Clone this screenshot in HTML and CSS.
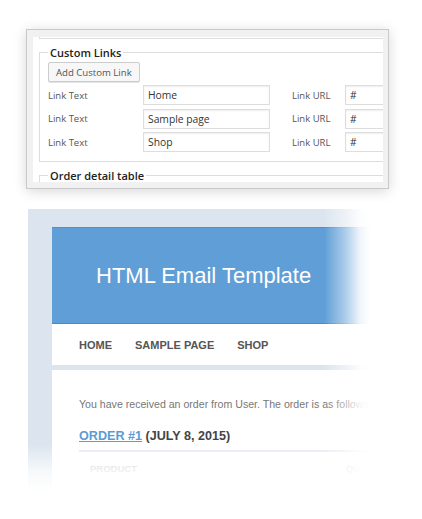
FILE: index.html
```html
<!DOCTYPE html>
<html lang="en">
<head>
    <meta charset="UTF-8">
    <meta name="viewport" content="width=device-width, initial-scale=1.0">
    <title>Email Template Settings</title>
    <link rel="stylesheet" href="styles.css">
</head>
<body>
    <div class="admin-frame">
        <div class="admin-inner">
            <div class="fieldset-end"></div>
            <fieldset class="group">
                <legend>Custom Links</legend>
                <button type="button" class="add-link">Add Custom Link</button>
                <div class="link-row">
                    <label>Link Text</label>
                    <input type="text" class="link-text" value="Home">
                    <label class="url-label">Link URL</label>
                    <input type="text" class="link-url" value="#">
                </div>
                <div class="link-row">
                    <label>Link Text</label>
                    <input type="text" class="link-text" value="Sample page">
                    <label class="url-label">Link URL</label>
                    <input type="text" class="link-url" value="#">
                </div>
                <div class="link-row">
                    <label>Link Text</label>
                    <input type="text" class="link-text" value="Shop">
                    <label class="url-label">Link URL</label>
                    <input type="text" class="link-url" value="#">
                </div>
            </fieldset>
            <fieldset class="group group-next">
                <legend>Order detail table</legend>
            </fieldset>
        </div>
    </div>

    <div class="email-preview">
        <div class="email">
            <div class="email-header">HTML Email Template</div>
            <div class="email-nav">
                <span>Home</span>
                <span>Sample page</span>
                <span>Shop</span>
            </div>
            <div class="email-body">
                <p class="intro">You have received an order from User. The order is as follows:</p>
                <h2 class="order-title"><a href="#">Order #1</a> (July 8, 2015)</h2>
                <div class="order-head">
                    <span class="col-product">Product</span>
                    <span>Quantity</span>
                </div>
            </div>
        </div>
    </div>
</body>
</html>
```

FILE: styles.css
```css
body {
    margin: 0;
    background-color: #fff;
    font-family: "Open Sans", Arial, sans-serif;
    overflow: hidden;
}

/* admin settings panel */
.admin-frame {
    width: 363px;
    height: 160px;
    margin: 29px 0 0 26px;
    padding: 7px 5px 6px 6px;
    box-sizing: border-box;
    border: 1px solid #c9c9c9;
    background-color: #f1f1f1;
    box-shadow: 0 2px 12px rgba(0,0,0,0.16);
}
.admin-inner {
    height: 100%;
    padding-left: 6px;
    background-color: #fff;
    overflow: hidden;
}
.fieldset-end {
    width: 420px;
    height: 1px;
    border-left: 1px solid #ddd;
    border-bottom: 1px solid #ddd;
}
.group {
    width: 420px;
    margin: 6px 0 0;
    padding: 0 8px 9px;
    border: 1px solid #ddd;
    box-sizing: border-box;
}
.group legend {
    padding: 0 2px;
    font-size: 11px;
    line-height: 15px;
    font-weight: 600;
    color: #222;
}
.group-next {
    margin-top: 6px;
    height: 30px;
}
.add-link {
    display: block;
    height: 20px;
    margin-top: 2px;
    padding: 0 7px;
    border: 1px solid #ccc;
    border-radius: 2px;
    background-color: #f7f7f7;
    box-shadow: 0 1px 0 #e4e4e4;
    font-family: "Open Sans", Arial, sans-serif;
    font-size: 9.6px;
    color: #555;
}
.link-row {
    display: flex;
    align-items: center;
    height: 20px;
    margin-top: 3.4px;
}
.link-row label {
    width: 95px;
    font-size: 9.5px;
    color: #555;
}
.link-row .url-label {
    width: 53px;
    margin-left: 22px;
}
.link-row input {
    height: 20px;
    padding: 0 4px;
    box-sizing: border-box;
    border: 1px solid #ddd;
    box-shadow: inset 0 1px 2px rgba(0,0,0,0.07);
    font-family: "Open Sans", Arial, sans-serif;
    font-size: 10.3px;
    color: #333;
}
.link-text {
    width: 127px;
}
.link-url {
    width: 110px;
}

/* email preview */
.email-preview {
    position: relative;
    width: 394px;
    height: 300px;
    margin: 20px 0 0 28px;
    padding: 18px 0 0 24px;
    box-sizing: border-box;
    background-color: #dce5ef;
    overflow: hidden;
    font-family: Arial, "Liberation Sans", sans-serif;
}
.email-preview::before {
    content: "";
    position: absolute;
    inset: 0;
    background: linear-gradient(to right, rgba(255,255,255,0) 296px, rgba(255,255,255,0.5) 318px, rgba(255,255,255,0.9) 332px, #fff 342px);
}
.email-preview::after {
    content: "";
    position: absolute;
    inset: 0;
    background: linear-gradient(to bottom, rgba(255,255,255,0) 236px, rgba(255,255,255,0.75) 262px, #fff 282px);
}
.email {
    width: 320px;
}
.email-header {
    height: 97px;
    box-sizing: border-box;
    border-top: 1px solid #4f8fcb;
    border-bottom: 1px solid #4a89c8;
    background-color: #5f9ed6;
    display: flex;
    align-items: center;
    padding-left: 44px;
    color: #fff;
    font-size: 22px;
}
.email-nav {
    height: 41px;
    margin-bottom: 5px;
    padding-left: 27px;
    display: flex;
    align-items: center;
    gap: 23px;
    background-color: #fff;
    font-size: 11px;
    font-weight: bold;
    text-transform: uppercase;
    color: #555;
}
.email-body {
    height: 200px;
    padding: 28px 0 0 27px;
    background-color: #fff;
}
.intro {
    margin: 0;
    font-size: 10.6px;
    line-height: 12px;
    color: #777;
    white-space: nowrap;
}
.order-title {
    margin: 19px 0 0;
    padding-bottom: 6px;
    border-bottom: 2px solid #e6ebf1;
    font-size: 12.6px;
    line-height: 15px;
    color: #444;
    text-transform: uppercase;
}
.order-title a {
    color: #5a9bd5;
}
.order-head {
    display: flex;
    padding: 11px 0 0 11px;
    font-size: 9.5px;
    line-height: 11px;
    font-weight: bold;
    color: #c4c4c4;
    text-transform: uppercase;
    white-space: nowrap;
}
.col-product {
    flex: none;
    width: 256px;
}
```
